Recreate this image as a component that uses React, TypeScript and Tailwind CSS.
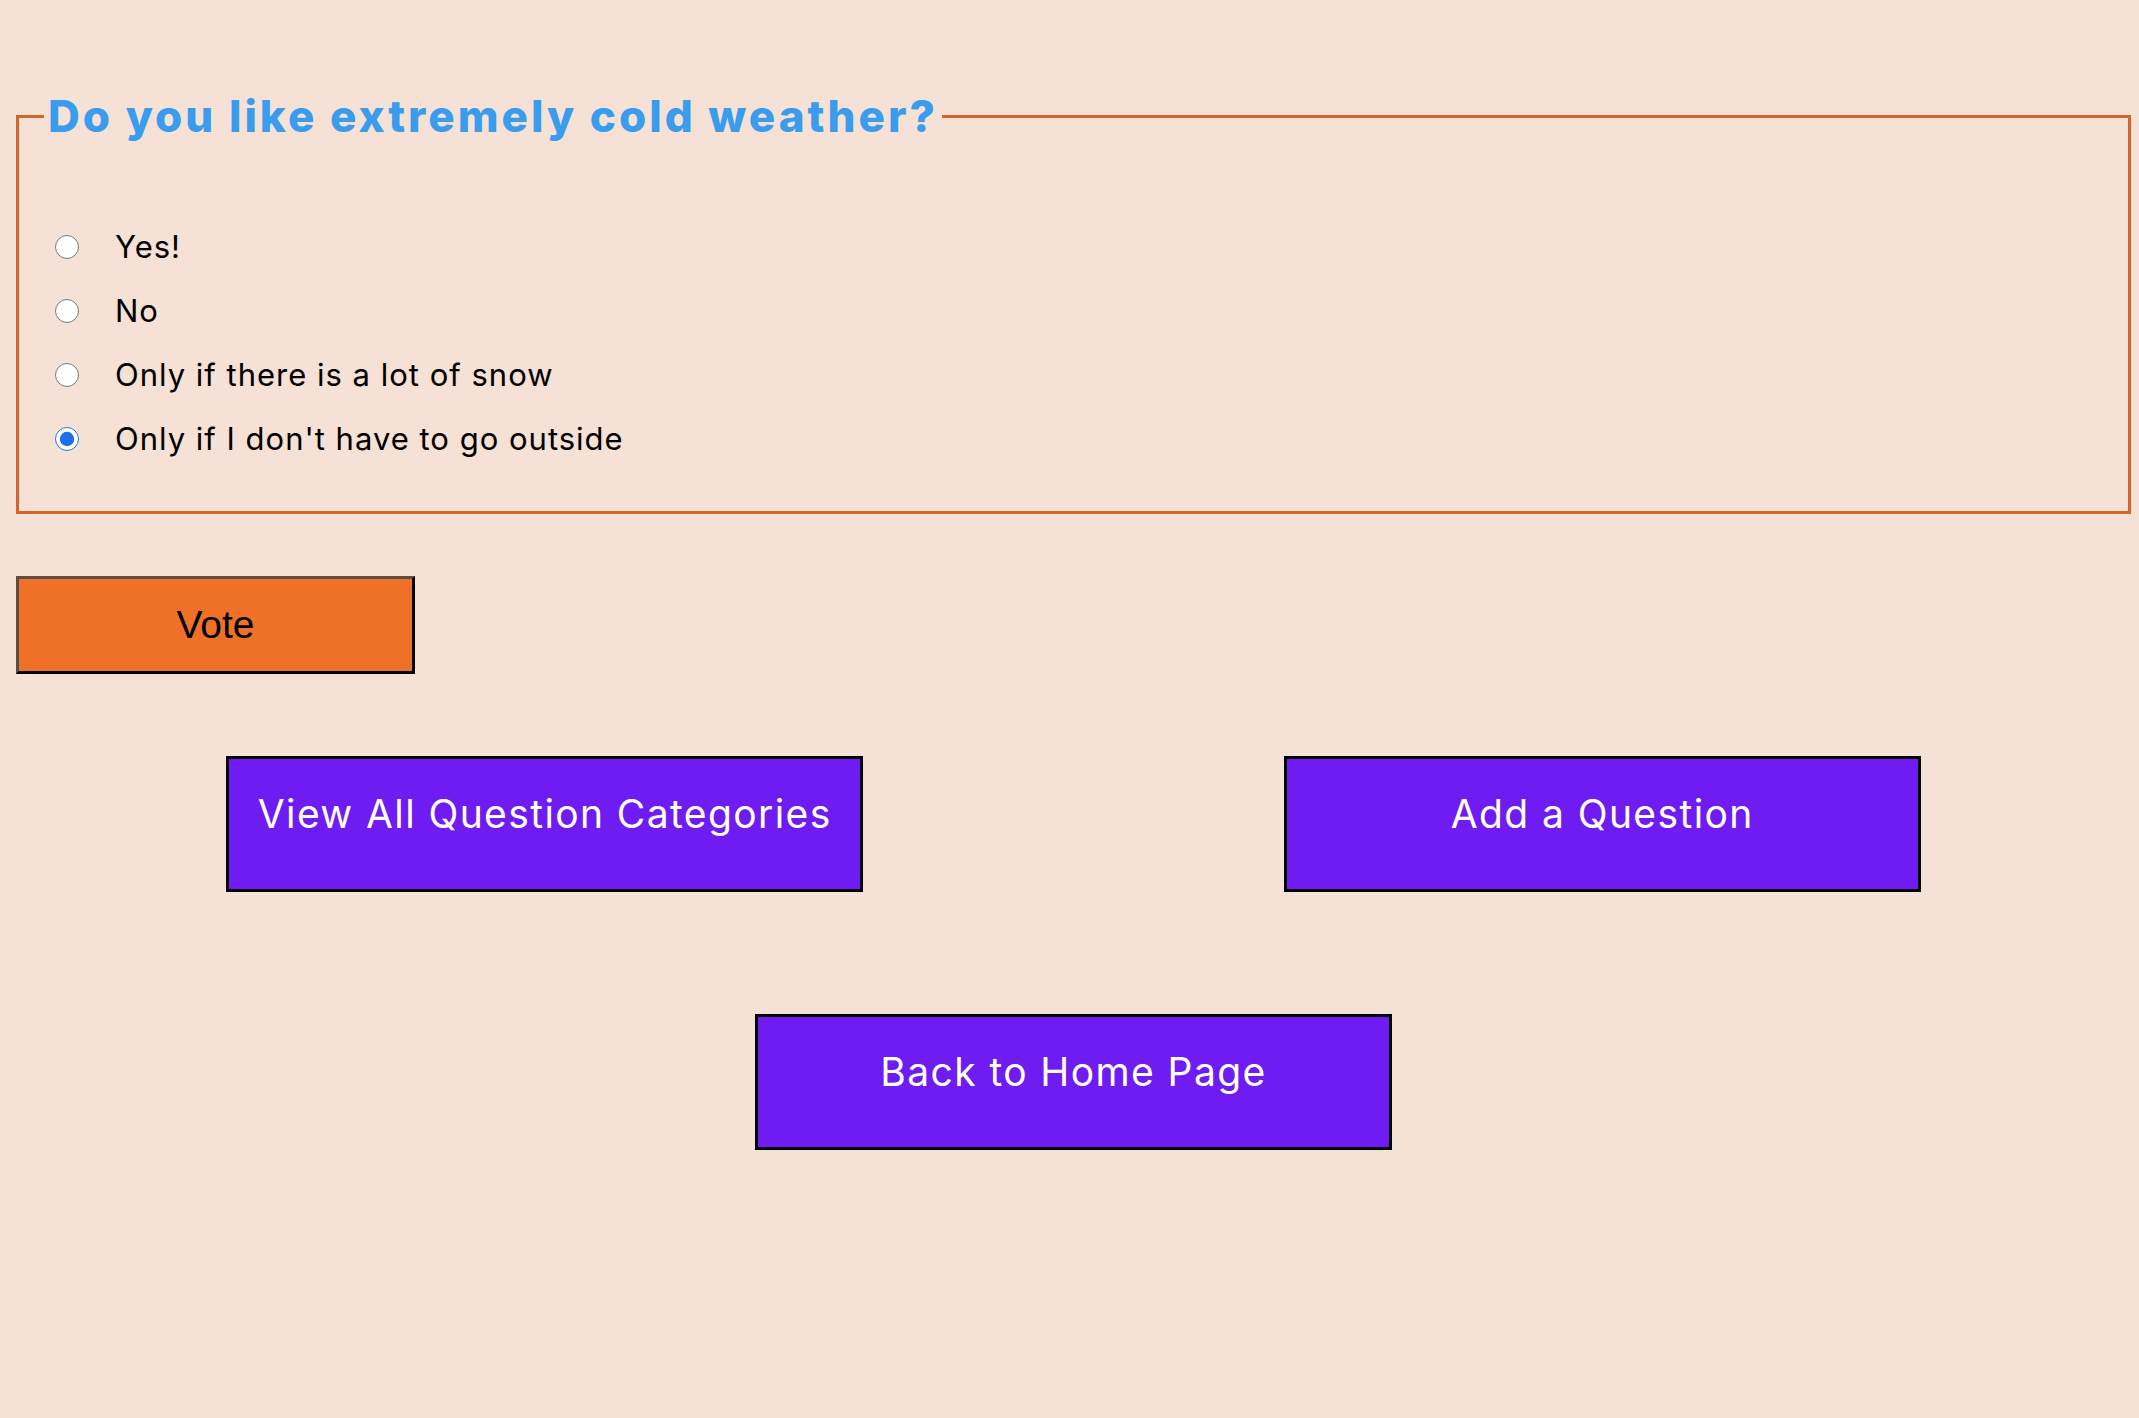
import React, { useState } from 'react';

const options = [
  'Yes!',
  'No',
  'Only if there is a lot of snow',
  "Only if I don't have to go outside",
];

const NavButton: React.FC<{ label: string }> = ({ label }) => (
  <button
    type="button"
    className="w-[637px] h-[136px] flex items-center justify-center pb-[20px] bg-[#6f1cf3] border-[3px] border-black text-white text-[39px] tracking-[1.4px] font-['Inter',sans-serif]"
  >
    {label}
  </button>
);

const App: React.FC = () => {
  const [choice, setChoice] = useState(3);

  return (
    <div className="min-h-[1418px] bg-[#f5e1d5] pt-[92px] pl-4 pr-2 font-['Inter',sans-serif]">
      <fieldset className="border-[3px] border-solid border-[#d4652b] pl-[25px] pb-[40px]">
        <legend className="px-1 text-[44px] leading-[48px] font-extrabold tracking-[3px] text-[#3a9ced]">
          Do you like extremely cold weather?
        </legend>

        <div className="mt-[75px] ml-[11px]">
          {options.map((opt, idx) => (
            <label key={idx} className="flex items-center h-16 gap-[36px] text-[31px] tracking-[1px] text-black cursor-pointer">
              <input
                type="radio"
                name="cold"
                checked={choice === idx}
                onChange={() => setChoice(idx)}
                className="w-6 h-6 m-0 accent-[#1f6fe8]"
              />
              <span>{opt}</span>
            </label>
          ))}
        </div>
      </fieldset>

      <button
        type="button"
        className="mt-[62px] w-[399px] h-[98px] bg-[#ef7128] border-[3px] border-t-[#5b4e48] border-l-[#5b4e48] border-r-black border-b-black text-black text-[39px] font-['Liberation_Sans',Arial,sans-serif]"
      >
        Vote
      </button>

      <div className="mt-[82px] grid grid-cols-2">
        <div className="flex justify-center">
          <NavButton label="View All Question Categories" />
        </div>
        <div className="flex justify-center">
          <NavButton label="Add a Question" />
        </div>
      </div>

      <div className="mt-[122px] flex justify-center">
        <NavButton label="Back to Home Page" />
      </div>
    </div>
  );
};

export default App;
